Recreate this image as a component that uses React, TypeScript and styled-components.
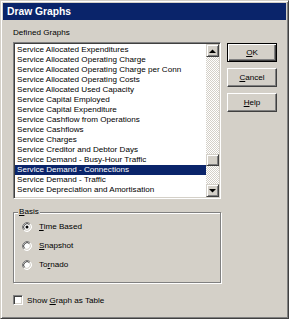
import React from 'react';
import styled, { createGlobalStyle } from 'styled-components';

const face = '#d4d0c8';
const shadow = '#808080';
const dark = '#404040';
const light = '#ffffff';
const navy = '#0a246a';
const uiFont = `'Liberation Sans', Arial, sans-serif`;

const GlobalStyle = createGlobalStyle`
  html, body {
    margin: 0;
    padding: 0;
    background: #ffffff;
  }
  body {
    font-family: ${uiFont};
  }
`;

const graphs = [
  'Service Allocated Expenditures',
  'Service Allocated Operating Charge',
  'Service Allocated Operating Charge per Conn',
  'Service Allocated Operating Costs',
  'Service Allocated Used Capacity',
  'Service Capital Employed',
  'Service Capital Expenditure',
  'Service Cashflow from Operations',
  'Service Cashflows',
  'Service Charges',
  'Service Creditor and Debtor Days',
  'Service Demand - Busy-Hour Traffic',
  'Service Demand - Connections',
  'Service Demand - Traffic',
  'Service Depreciation and Amortisation',
  'Service Depreciation',
];

const Window = styled.div`
  width: 289px;
  height: 319px;
  box-sizing: border-box;
  background: ${face};
  border: 1px solid;
  border-color: ${face} ${dark} ${dark} ${face};
  box-shadow: inset 1px 1px 0 ${light}, inset -1px -1px 0 ${shadow};
  padding: 2px;
  display: flex;
  flex-direction: column;
  font-size: 8.1px;
  color: #000;
`;

const TitleBar = styled.div`
  height: 17px;
  background: ${navy};
  color: #fff;
  font-weight: bold;
  font-size: 10.3px;
  display: flex;
  align-items: center;
  padding-left: 4px;
`;

const Body = styled.div`
  display: flex;
  gap: 6px;
  padding: 8px 0 0 10px;
`;

const LeftColumn = styled.div`
  width: 208px;
  display: flex;
  flex-direction: column;
`;

const Caption = styled.div`
  height: 10px;
  line-height: 10px;
  margin-bottom: 4px;
`;

const ListBox = styled.div`
  height: 157px;
  box-sizing: border-box;
  background: #fff;
  border: 1px solid;
  border-color: ${shadow} ${light} ${light} ${shadow};
  box-shadow: inset 1px 1px 0 ${dark}, inset -1px -1px 0 ${face};
  padding: 1px;
  display: flex;
`;

const Items = styled.div`
  flex: 1;
  overflow: hidden;
  padding-top: 1px;
`;

const Item = styled.div<{ $selected?: boolean }>`
  height: 10px;
  line-height: 10px;
  padding-left: 2px;
  white-space: nowrap;
  overflow: hidden;
  background: ${(p) => (p.$selected ? navy : 'transparent')};
  color: ${(p) => (p.$selected ? '#fff' : '#000')};
`;

const ScrollBar = styled.div`
  width: 13px;
  display: flex;
  flex-direction: column;
`;

const raised = `
  box-sizing: border-box;
  background: ${face};
  border: 1px solid;
  border-color: ${face} ${dark} ${dark} ${face};
  box-shadow: inset 1px 1px 0 ${light}, inset -1px -1px 0 ${shadow};
`;

const ArrowButton = styled.div`
  ${raised}
  height: 13px;
  display: flex;
  align-items: center;
  justify-content: center;
`;

const Track = styled.div`
  flex: 1;
  background-color: #fff;
  background-image: conic-gradient(${face} 25%, #fff 0 50%, ${face} 0 75%, #fff 0);
  background-size: 2px 2px;
`;

const Thumb = styled.div<{ $offset: number }>`
  ${raised}
  height: 12px;
  margin-top: ${(p) => p.$offset}px;
`;

const GroupBox = styled.div`
  position: relative;
  margin-top: 13px;
  height: 71px;
  box-sizing: border-box;
  border: 1px solid ${shadow};
  box-shadow: 1px 1px 0 ${light}, inset 1px 1px 0 ${light};
  padding: 4px 0 0 0;
`;

const Legend = styled.span`
  position: absolute;
  top: -6px;
  left: 4px;
  padding: 0 1px;
  line-height: 10px;
  background: ${face};
`;

const RadioRow = styled.div`
  height: 19px;
  display: flex;
  align-items: center;
  gap: 7px;
  padding-left: 8px;
`;

const CheckRow = styled.div`
  margin-top: 12px;
  display: flex;
  align-items: center;
  gap: 4px;
`;

const CheckBox = styled.div`
  width: 10px;
  height: 10px;
  box-sizing: border-box;
  background: #fff;
  border: 1px solid;
  border-color: ${shadow} ${light} ${light} ${shadow};
  box-shadow: inset 1px 1px 0 ${dark}, inset -1px -1px 0 ${face};
`;

const RightColumn = styled.div`
  display: flex;
  flex-direction: column;
  gap: 6px;
  margin-top: 15px;
`;

const Button = styled.div<{ $default?: boolean }>`
  width: 50px;
  height: 19px;
  box-sizing: border-box;
  background: ${face};
  display: flex;
  align-items: center;
  justify-content: center;
  border: 1px solid;
  border-color: ${(p) => (p.$default ? '#000' : `${light} ${dark} ${dark} ${light}`)};
  box-shadow: ${(p) =>
    p.$default
      ? `inset 1px 1px 0 ${light}, inset -1px -1px 0 ${dark}, inset -2px -2px 0 ${shadow}`
      : `inset -1px -1px 0 ${shadow}`};
`;

const Key = styled.span`
  text-decoration: underline;
`;

const Triangle: React.FC<{ down?: boolean }> = ({ down }) => (
  <svg width="7" height="4" viewBox="0 0 7 4">
    <polygon points={down ? '0,0 7,0 3.5,3.5' : '0,4 7,4 3.5,0.5'} fill="#000" />
  </svg>
);

const Radio: React.FC<{ checked?: boolean }> = ({ checked }) => (
  <svg width="10" height="10" viewBox="0 0 10 10">
    <circle cx="5" cy="5" r="4" fill="#fff" />
    <path d="M1.82 8.18 A4.5 4.5 0 0 1 8.18 1.82" stroke={shadow} fill="none" />
    <path d="M8.18 1.82 A4.5 4.5 0 0 1 1.82 8.18" stroke={light} fill="none" />
    <path d="M2.53 7.47 A3.5 3.5 0 0 1 7.47 2.53" stroke={dark} fill="none" />
    <path d="M7.47 2.53 A3.5 3.5 0 0 1 2.53 7.47" stroke={face} fill="none" />
    {checked && <circle cx="5" cy="5" r="1.5" fill="#000" />}
  </svg>
);

export default function App() {
  return (
    <>
      <GlobalStyle />
      <Window>
        <TitleBar>Draw Graphs</TitleBar>
        <Body>
          <LeftColumn>
            <Caption>Defined Graphs</Caption>
            <ListBox>
              <Items>
                {graphs.map((g, i) => (
                  <Item key={i} $selected={i === 12}>
                    {g}
                  </Item>
                ))}
              </Items>
              <ScrollBar>
                <ArrowButton>
                  <Triangle />
                </ArrowButton>
                <Track>
                  <Thumb $offset={97} />
                </Track>
                <ArrowButton>
                  <Triangle down />
                </ArrowButton>
              </ScrollBar>
            </ListBox>
            <GroupBox>
              <Legend>
                <Key>B</Key>asis
              </Legend>
              <RadioRow>
                <Radio checked />
                <span>
                  <Key>T</Key>ime Based
                </span>
              </RadioRow>
              <RadioRow>
                <Radio />
                <span>
                  <Key>S</Key>napshot
                </span>
              </RadioRow>
              <RadioRow>
                <Radio />
                <span>
                  To<Key>r</Key>nado
                </span>
              </RadioRow>
            </GroupBox>
            <CheckRow>
              <CheckBox />
              <span>
                Show <Key>G</Key>raph as Table
              </span>
            </CheckRow>
          </LeftColumn>
          <RightColumn>
            <Button $default>
              <span>
                <Key>O</Key>K
              </span>
            </Button>
            <Button>
              <span>
                <Key>C</Key>ancel
              </span>
            </Button>
            <Button>
              <span>
                <Key>H</Key>elp
              </span>
            </Button>
          </RightColumn>
        </Body>
      </Window>
    </>
  );
}
